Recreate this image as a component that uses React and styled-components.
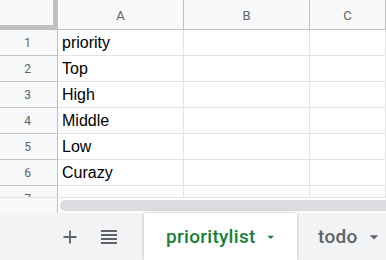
import React from 'react'
import styled, {createGlobalStyle} from 'styled-components'

const Global = createGlobalStyle`
    html, body {
        margin: 0;
        padding: 0;
        background: #fff;
        overflow: hidden;
    }
`

const Sheet = styled.div`
    width: 386px;
    height: 260px;
    display: flex;
    flex-direction: column;
    overflow: hidden;
`

const Grid = styled.div`
    height: 197px;
    overflow: hidden;
    flex-shrink: 0;
`

const Row = styled.div`
    display: grid;
    grid-template-columns: 58px 126px 126px 1fr;
    height: ${p => p.$h}px;
`

const Corner = styled.div`
    box-sizing: border-box;
    background: #f8f9fa;
    border-right: 5px solid #c0c0c0;
    border-bottom: 5px solid #c0c0c0;
`

const ColHead = styled.div`
    box-sizing: border-box;
    background: #f8f9fa;
    border-right: 1px solid #c0c0c0;
    border-bottom: 1px solid #c0c0c0;
    display: flex;
    align-items: center;
    justify-content: center;
    font-family: Roboto, sans-serif;
    font-size: 13px;
    color: #5f6368;
    padding-top: 1px;
`

const RowHead = styled.div`
    box-sizing: border-box;
    background: #f8f9fa;
    border-right: 1px solid #c0c0c0;
    border-bottom: 1px solid #c0c0c0;
    display: flex;
    align-items: center;
    justify-content: center;
    font-family: Roboto, sans-serif;
    font-size: 12px;
    color: #5f6368;
    padding-right: 2px;
`

const Cell = styled.div`
    box-sizing: border-box;
    border-right: 1px solid #e2e3e3;
    border-bottom: 1px solid #e2e3e3;
    display: flex;
    align-items: flex-end;
    padding: 0 3px 3px 4px;
    font-family: "Liberation Sans", Arial, sans-serif;
    font-size: 16px;
    line-height: 18px;
    color: #000;
    white-space: nowrap;
`

const ScrollRow = styled.div`
    display: flex;
    height: 16px;
    box-sizing: border-box;
    border-top: 1px solid #e2e3e3;
    flex-shrink: 0;
`

const ScrollGutter = styled.div`
    width: 58px;
    box-sizing: border-box;
    background: #f8f9fa;
    border-right: 1px solid #c0c0c0;
`

const Thumb = styled.div`
    flex: 1;
    height: 11px;
    margin: 2px 0 0 2px;
    background: #dadce0;
    border-radius: 6px 0 0 6px;
`

const TabBar = styled.div`
    flex: 1;
    display: flex;
    align-items: stretch;
    background: #f1f3f4;
`

const Tools = styled.div`
    display: flex;
    align-items: center;
    gap: 16px;
    padding-left: 59px;
    margin-right: 23px;
    color: #5f6368;

    svg {
        display: block;
    }
`

const Tab = styled.div`
    display: flex;
    align-items: center;
    gap: 10px;
    padding: 0 ${p => p.$active ? '22px' : '0'} 0 ${p => p.$active ? '22px' : '21px'};
    width: ${p => p.$active ? '153px' : 'auto'};
    box-sizing: border-box;
    background: ${p => p.$active ? '#fff' : 'transparent'};
    box-shadow: ${p => p.$active ? '0 0 3px rgba(60,64,67,.35)' : 'none'};
    color: ${p => p.$active ? '#188038' : '#5f6368'};
    font-family: Roboto, sans-serif;
    font-weight: 500;
    font-size: 19px;
    letter-spacing: 0.3px;
    white-space: nowrap;
`

const Arrow = ({color}) => (
    <svg width="12" height="12" viewBox="5 5 14 14" fill={color}>
        <path d="M7 10l5 5 5-5z" />
    </svg>
)

const rows = ['priority', 'Top', 'High', 'Middle', 'Low', 'Curazy', '']

const App = () => {
    return (
        <>
            <Global />
            <Sheet>
                <Grid>
                    <Row $h={30}>
                        <Corner />
                        <ColHead>A</ColHead>
                        <ColHead>B</ColHead>
                        <ColHead>C</ColHead>
                    </Row>
                    {rows.map((text, i) => (
                        <Row $h={26} key={i}>
                            <RowHead>{i + 1}</RowHead>
                            <Cell>{text}</Cell>
                            <Cell />
                            <Cell />
                        </Row>
                    ))}
                </Grid>
                <ScrollRow>
                    <ScrollGutter />
                    <Thumb />
                </ScrollRow>
                <TabBar>
                    <Tools>
                        <svg width="22" height="22" viewBox="0 0 24 24" fill="currentColor">
                            <path d="M19 13h-6v6h-2v-6H5v-2h6V5h2v6h6v2z" />
                        </svg>
                        <svg width="24" height="24" viewBox="0 0 24 24" fill="currentColor">
                            <path d="M4 15h16v-2H4v2zm0 4h16v-2H4v2zm0-8h16V9H4v2zm0-6v2h16V5H4z" />
                        </svg>
                    </Tools>
                    <Tab $active>
                        prioritylist
                        <Arrow color="#188038" />
                    </Tab>
                    <Tab>
                        todo
                        <Arrow color="#5f6368" />
                    </Tab>
                </TabBar>
            </Sheet>
        </>
    )
}

export default App
